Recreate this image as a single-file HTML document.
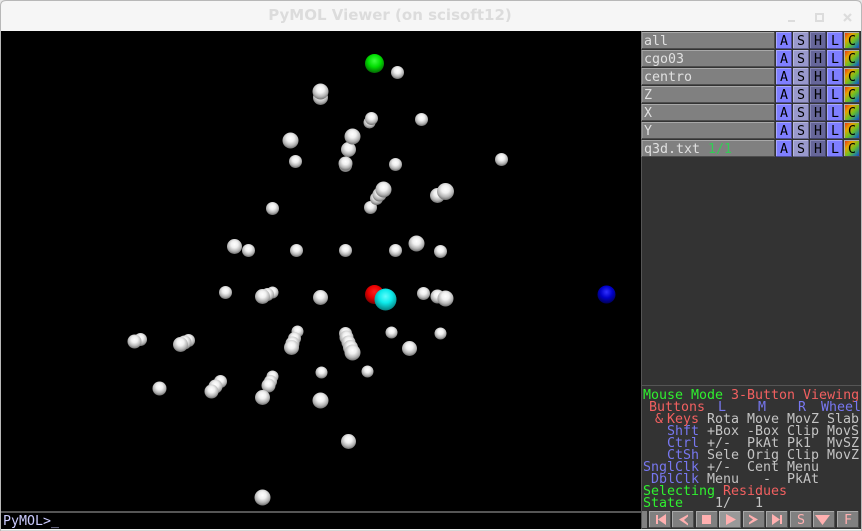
<!DOCTYPE html>
<html><head><meta charset="utf-8"><style>
html,body{margin:0;padding:0;background:#e8e8e8;width:862px;height:531px;overflow:hidden}
svg{display:block}
text{font-family:"DejaVu Sans Mono","Liberation Mono",monospace;font-size:13.3px}
.t{fill:#e0e0e0}.g{fill:#2ff02f}.r{fill:#f26060}.b{fill:#7777f0}.w{fill:#c4c4c4}
</style></head><body>
<svg xmlns="http://www.w3.org/2000/svg" width="862" height="531" viewBox="0 0 862 531">
<defs>
<radialGradient id="sw" cx=".5" cy=".36" r=".66"><stop offset="0" stop-color="#fff"/><stop offset=".35" stop-color="#f0f0f0"/><stop offset=".7" stop-color="#b4b4b4"/><stop offset="1" stop-color="#666"/></radialGradient>
<radialGradient id="sr" cx=".5" cy=".36" r=".66"><stop offset="0" stop-color="#ff2020"/><stop offset=".5" stop-color="#e80000"/><stop offset="1" stop-color="#700000"/></radialGradient>
<radialGradient id="sc" cx=".5" cy=".36" r=".66"><stop offset="0" stop-color="#60fcfc"/><stop offset=".45" stop-color="#0cebeb"/><stop offset="1" stop-color="#067a7a"/></radialGradient>
<radialGradient id="sg" cx=".5" cy=".36" r=".66"><stop offset="0" stop-color="#40ff40"/><stop offset=".5" stop-color="#0d0"/><stop offset="1" stop-color="#056005"/></radialGradient>
<radialGradient id="sb" cx=".5" cy=".36" r=".66"><stop offset="0" stop-color="#3030ff"/><stop offset=".5" stop-color="#0000c8"/><stop offset="1" stop-color="#000050"/></radialGradient>
<linearGradient id="c" x1="0" y1="0" x2="1" y2="1"><stop offset="0" stop-color="#e02020"/><stop offset=".3" stop-color="#e8a000"/><stop offset=".55" stop-color="#70c020"/><stop offset=".8" stop-color="#2080a0"/><stop offset="1" stop-color="#3020d0"/></linearGradient>
<g id="row">
<rect x="0" y="0" width="133" height="17" fill="#808080"/><path d="M0 17V.5H133" fill="none" stroke="#a8a8a8"/><path d="M0 16.500H132.500V0" fill="none" stroke="#4d4d4d"/>
<rect x="134" y="0" width="16" height="17" fill="#7f7fff"/><path d="M134.500 17V.5H150" fill="none" stroke="#a8a8ff"/><path d="M134 16.500H149.500V0" fill="none" stroke="#4d4d99"/>
<rect x="151" y="0" width="16" height="17" fill="#9999cc"/><path d="M151.500 17V.5H167" fill="none" stroke="#b8b8e0"/><path d="M151 16.500H166.500V0" fill="none" stroke="#66668f"/>
<rect x="168" y="0" width="16" height="17" fill="#666699"/><path d="M168.500 17V.5H184" fill="none" stroke="#8888b8"/><path d="M168 16.500H183.500V0" fill="none" stroke="#44446a"/>
<rect x="185" y="0" width="16" height="17" fill="#7f7fff"/><path d="M185.500 17V.5H201" fill="none" stroke="#a8a8ff"/><path d="M185 16.500H200.500V0" fill="none" stroke="#4d4d99"/>
<rect x="202" y="0" width="16" height="17" fill="url(#c)"/><path d="M202.500 17V.5H218" fill="none" stroke="#b0b0b0"/><path d="M202 16.500H217.500V0" fill="none" stroke="#444"/>
<text x="138" y="13" fill="#000">A</text><text x="155" y="13" fill="#000">S</text><text x="172" y="13" fill="#000">H</text><text x="189" y="13" fill="#000">L</text><text x="206" y="13" fill="#000">C</text>
</g>
<g id="btn"><rect width="22" height="17" fill="#808080"/><path d="M.5 17V.5H22" fill="none" stroke="#a8a8a8"/><path d="M0 16.500H21.500V0" fill="none" stroke="#4d4d4d"/></g>
</defs>

<!-- window -->
<path d="M.5 531V6Q.5 .5 6 .5H856Q861.500 .5 861.500 6V531Z" fill="#f6f6f6" stroke="#b8b8b8"/>
<text x="390" y="20" text-anchor="middle" style="font-family:'DejaVu Sans','Liberation Sans',sans-serif;font-size:15px;font-weight:bold" fill="#dcdcdc">PyMOL Viewer (on scisoft12)</text>
<rect x="788" y="20" width="7" height="2" fill="#dcdcdc"/>
<rect x="816" y="14" width="7" height="7" fill="none" stroke="#dcdcdc" stroke-width="2"/>
<path d="M844 14L851 21M851 14L844 21" stroke="#dcdcdc" stroke-width="2.200"/>

<!-- viewer -->
<rect x="1" y="31" width="640" height="498" fill="#000"/>
<rect x="1" y="511" width="640" height="2" fill="#555"/>
<text x="3" y="525" fill="#ccccff">PyMOL&gt;_</text>

<!-- spheres -->
<g transform="translate(.5 .5)">
<g fill="url(#sw)">
<circle cx="397" cy="72" r="6.500"/>
<circle cx="320" cy="97" r="7.500"/><circle cx="320" cy="91" r="8"/>
<circle cx="369" cy="122" r="6"/><circle cx="371" cy="118" r="6.500"/>
<circle cx="421" cy="119" r="6.500"/><circle cx="290" cy="140" r="8"/>
<circle cx="348" cy="149" r="7.500"/><circle cx="352" cy="136" r="8"/>
<circle cx="345" cy="165" r="6.500"/><circle cx="345" cy="163" r="7"/>
<circle cx="295" cy="161" r="6.500"/><circle cx="395" cy="164" r="6.500"/><circle cx="501" cy="159" r="6.500"/>
<circle cx="370" cy="207" r="6.500"/><circle cx="376" cy="198" r="6.500"/><circle cx="379" cy="194" r="7"/><circle cx="383" cy="189" r="8"/>
<circle cx="437" cy="195" r="7.500"/><circle cx="445" cy="191" r="8.500"/>
<circle cx="272" cy="208" r="6.500"/>
<circle cx="234" cy="246" r="7.500"/><circle cx="248" cy="250" r="6.500"/><circle cx="296" cy="250" r="6.500"/><circle cx="345" cy="250" r="6.500"/><circle cx="395" cy="250" r="6.500"/><circle cx="416" cy="243" r="8"/><circle cx="440" cy="251" r="6.500"/>
<circle cx="225" cy="292" r="6.500"/><circle cx="272" cy="292" r="6"/><circle cx="267" cy="294" r="6.500"/><circle cx="262" cy="296" r="7.500"/>
<circle cx="320" cy="297" r="7.500"/>
<circle cx="423" cy="293" r="6.500"/><circle cx="437" cy="296" r="7"/><circle cx="445" cy="298" r="8"/>
<circle cx="297" cy="331" r="6"/><circle cx="294" cy="338" r="6.500"/><circle cx="292" cy="343" r="7"/><circle cx="291" cy="347" r="7.500"/>
<circle cx="345" cy="333" r="6.500"/><circle cx="346" cy="337" r="7"/><circle cx="348" cy="342" r="7"/><circle cx="350" cy="347" r="7.500"/><circle cx="352" cy="352" r="8"/>
<circle cx="391" cy="332" r="6"/><circle cx="440" cy="333" r="6"/><circle cx="409" cy="348" r="7.500"/>
<circle cx="140" cy="339" r="6.500"/><circle cx="134" cy="341" r="7"/>
<circle cx="188" cy="340" r="6.500"/><circle cx="184" cy="342" r="7"/><circle cx="180" cy="344" r="7.500"/>
<circle cx="321" cy="372" r="6"/><circle cx="367" cy="371" r="6"/>
<circle cx="159" cy="388" r="7"/><circle cx="220" cy="381" r="6.500"/><circle cx="215" cy="386" r="7"/><circle cx="211" cy="391" r="7"/>
<circle cx="272" cy="376" r="6"/><circle cx="270" cy="381" r="6.500"/><circle cx="268" cy="385" r="7"/>
<circle cx="262" cy="397" r="7.500"/><circle cx="320" cy="400" r="8"/><circle cx="348" cy="441" r="7.500"/><circle cx="262" cy="497" r="8"/>
</g>
<circle cx="374" cy="63" r="9.500" fill="url(#sg)"/>
<circle cx="374" cy="294" r="9.500" fill="url(#sr)"/>
<circle cx="385" cy="299" r="11" fill="url(#sc)"/>
<circle cx="606" cy="294" r="9" fill="url(#sb)"/>
</g>

<!-- panel -->
<rect x="641" y="31" width="220" height="498" fill="#333"/>
<rect x="641" y="31" width="1" height="498" fill="#555"/>
<rect x="642" y="385" width="219" height="1" fill="#555"/>
<use href="#row" x="642" y="32"/><use href="#row" x="642" y="50"/><use href="#row" x="642" y="68"/><use href="#row" x="642" y="86"/><use href="#row" x="642" y="104"/><use href="#row" x="642" y="122"/><use href="#row" x="642" y="140"/>
<g class="t">
<text x="644" y="45">all</text><text x="644" y="63">cgo03</text><text x="644" y="81">centro</text><text x="644" y="99">Z</text><text x="644" y="117">X</text><text x="644" y="135">Y</text><text x="644" y="153">q3d.txt</text>
</g>
<text x="708" y="153" fill="#33cc55">1/1</text>

<!-- mouse mode -->
<text x="643" y="399" class="g">Mouse Mode</text><text x="731" y="399" class="r">3-Button Viewing</text>
<text x="649" y="411" class="r">Buttons</text><text x="718" y="411" class="b">L</text><text x="758" y="411" class="b">M</text><text x="798" y="411" class="b">R</text><text x="821" y="411" class="b">Wheel</text>
<text x="655" y="423" class="r">&amp;</text><text x="667" y="423" class="r">Keys</text><text x="707" y="423" class="w">Rota</text><text x="747" y="423" class="w">Move</text><text x="787" y="423" class="w">MovZ</text><text x="827" y="423" class="w">Slab</text>
<text x="667" y="435" class="b">Shft</text><text x="707" y="435" class="w">+Box</text><text x="747" y="435" class="w">-Box</text><text x="787" y="435" class="w">Clip</text><text x="827" y="435" class="w">MovS</text>
<text x="667" y="447" class="b">Ctrl</text><text x="707" y="447" class="w">+/-</text><text x="747" y="447" class="w">PkAt</text><text x="787" y="447" class="w">Pk1</text><text x="827" y="447" class="w">MvSZ</text>
<text x="667" y="459" class="b">CtSh</text><text x="707" y="459" class="w">Sele</text><text x="747" y="459" class="w">Orig</text><text x="787" y="459" class="w">Clip</text><text x="827" y="459" class="w">MovZ</text>
<text x="643" y="471" class="b">SnglClk</text><text x="707" y="471" class="w">+/-</text><text x="747" y="471" class="w">Cent</text><text x="787" y="471" class="w">Menu</text>
<text x="651" y="483" class="b">DblClk</text><text x="707" y="483" class="w">Menu</text><text x="763" y="483" class="w">-</text><text x="787" y="483" class="w">PkAt</text>
<text x="643" y="495" class="g">Selecting</text><text x="723" y="495" class="r">Residues</text>
<text x="643" y="507" class="g">State</text><text x="715" y="507" class="w">1/</text><text x="755" y="507" class="w">1</text>

<!-- transport -->
<rect x="642" y="511" width="5" height="17" fill="#808080"/>
<use href="#btn" x="649" y="511"/><use href="#btn" x="672" y="511"/><use href="#btn" x="696" y="511"/>
<rect x="719" y="511" width="22" height="17" fill="#999"/>
<path d="M719.500 528V511.500H741" fill="none" stroke="#bbb"/><path d="M719 527.500H740.500V511" fill="none" stroke="#666"/>
<use href="#btn" x="743" y="511"/><use href="#btn" x="766" y="511"/><use href="#btn" x="790" y="511"/><use href="#btn" x="813" y="511"/><use href="#btn" x="837" y="511"/>
<g fill="#ffb0b0">
<path d="M656 515h2v9h-2zM666 514v11l-8-5.500z"/>
<path d="M679 519.500l9-5v2l-4 3.500 4 3.500v2z"/>
<rect x="702" y="515" width="9" height="9"/>
<path d="M726 514l10 5.500-10 5.500z"/>
<path d="M749 514.500l9 5-9 5v-2l4-3-4-3z"/>
<path d="M772 514v11l8-5.500zM780 515h2v9h-2z"/>
<path d="M815 515h15l-7.500 10z"/>
</g>
<text x="797" y="524" fill="#ffb0b0">S</text>
<text x="844" y="524" fill="#ffb0b0">F</text>
</svg>
</body></html>
